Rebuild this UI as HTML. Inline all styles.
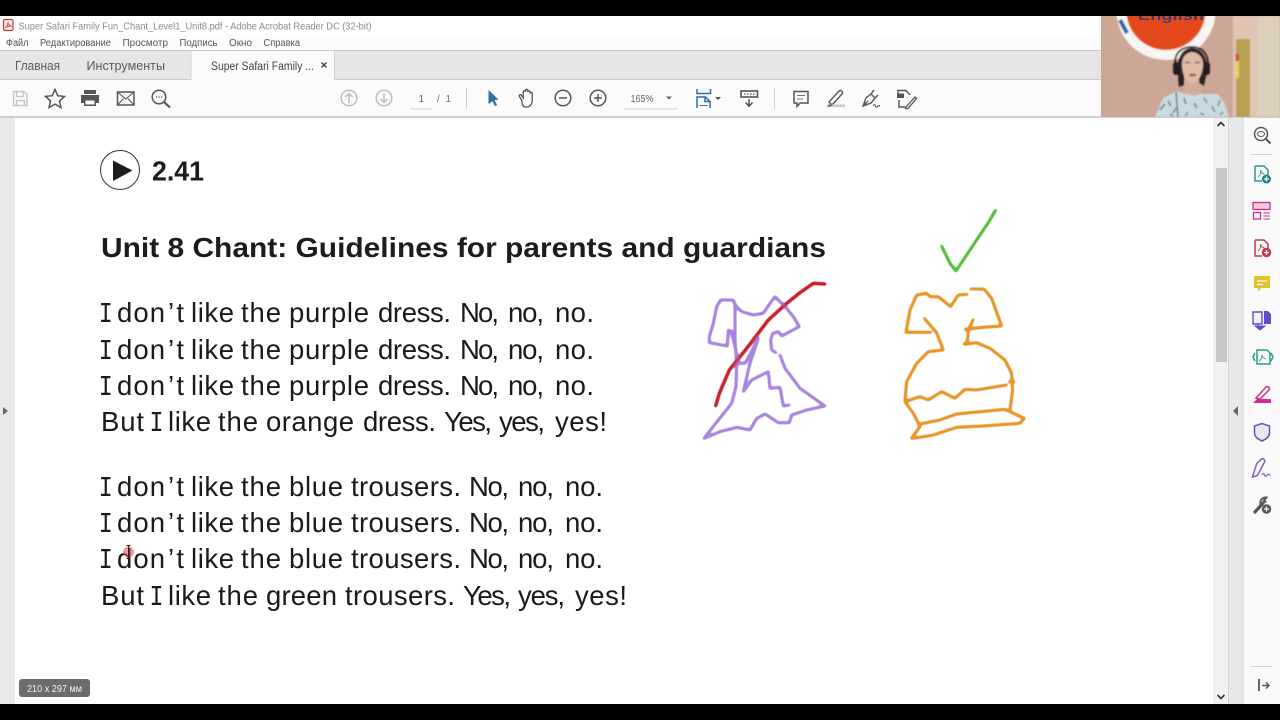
<!DOCTYPE html>
<html lang="ru"><head><meta charset="utf-8"><title>Super Safari Family Fun Chant</title>
<style>
html,body{margin:0;padding:0;background:#000;width:1280px;height:720px;overflow:hidden}
svg{display:block;filter:blur(.3px)}
text{font-family:"Liberation Sans","Noto Sans CJK SC",sans-serif}
.l{font-size:27.5px;fill:#1a1a1a}
.i{font-size:29px;fill:#1a1a1a;font-family:"Liberation Mono",monospace}
.b{font-size:27.5px;font-weight:bold;fill:#1c1c1c}
.m{font-size:10px;fill:#555}
.t{font-size:13px;fill:#5a5a5a}
.g{fill:none;stroke:#555;stroke-width:1.5}
</style></head><body>
<svg width="1280" height="720" viewBox="0 0 1280 720" xmlns="http://www.w3.org/2000/svg">
<defs>
<filter id="bl"><feGaussianBlur stdDeviation="0.8"/></filter>
<filter id="sl"><feGaussianBlur stdDeviation="0.35"/></filter>
<filter id="ink" x="-5%" y="-5%" width="110%" height="110%"><feGaussianBlur stdDeviation="3"/><feComponentTransfer><feFuncA type="linear" slope="2.4" intercept="-0.55"/></feComponentTransfer></filter>
<clipPath id="cam"><rect x="1101" y="16" width="179" height="101"/></clipPath>
</defs>
<rect width="1280" height="720" fill="#000"/>
<!-- chrome -->
<rect y="16" width="1280" height="18" fill="#fff"/>
<rect y="34" width="1280" height="16" fill="#fcfcfc"/>
<rect y="50" width="1280" height="1.5" fill="#c9c9c9"/>
<rect y="51" width="1280" height="28" fill="#e6e6e6"/>
<rect x="191" y="51" width="143" height="29" fill="#fbfbfb"/>
<rect x="190.500" y="51" width="1" height="29" fill="#d4d4d4"/>
<rect x="334" y="51" width="1" height="29" fill="#d4d4d4"/>
<rect y="79" width="191" height="1" fill="#c9c9c9"/><rect x="334" y="79" width="946" height="1" fill="#c9c9c9"/>
<rect y="80" width="1280" height="36" fill="#fbfbfb"/>
<rect y="116" width="1280" height="2" fill="#d0d0d0"/>
<!-- content -->
<rect y="118" width="1280" height="586" fill="#fff"/>
<rect y="118" width="15" height="586" fill="#e9e9e9"/>
<rect x="1213" y="118" width="16" height="586" fill="#f1f1f1"/>
<rect x="1216" y="168" width="11" height="194" fill="#c8c8c8"/>
<rect x="1229" y="118" width="14" height="586" fill="#e8e8e8"/>
<rect x="1228" y="118" width="1" height="586" fill="#d4d4d4"/>
<rect x="1242.500" y="118" width="1" height="586" fill="#d4d4d4"/>
<rect x="1243.500" y="118" width="37" height="586" fill="#fafafa"/>
<path d="M3 407l5 4-5 4z" fill="#666"/>
<path d="M1238 406v10l-5-5z" fill="#666"/>
<path d="M1217.500 126l3.500-3.500 3.500 3.500" fill="none" stroke="#333" stroke-width="1.6"/>
<path d="M1217.500 695l3.500 3.500 3.500-3.500" fill="none" stroke="#333" stroke-width="1.6"/>

<!-- title / menu -->
<g fill="none" stroke="#c0392b" stroke-width="1.2"><rect x="3.500" y="19.500" width="9.500" height="11" rx="1.500" fill="#fbeaea"/><path d="M5 28c2-1 3-4 3-6 0 2 1 4 4 4-2 0-5 0-7 2z" stroke-width=".8"/></g>
<text x="18.500" y="29.500" font-size="10.500" fill="#8c8c8c" textLength="353" lengthAdjust="spacingAndGlyphs">Super Safari Family Fun_Chant_Level1_Unit8.pdf - Adobe Acrobat Reader DC (32-bit)</text>
<text class="m" x="6" y="46" textLength="22.500" lengthAdjust="spacingAndGlyphs">Файл</text>
<text class="m" x="40" y="46" textLength="71" lengthAdjust="spacingAndGlyphs">Редактирование</text>
<text class="m" x="122.500" y="46" textLength="45.500" lengthAdjust="spacingAndGlyphs">Просмотр</text>
<text class="m" x="179.500" y="46" textLength="38" lengthAdjust="spacingAndGlyphs">Подпись</text>
<text class="m" x="229" y="46" textLength="23" lengthAdjust="spacingAndGlyphs">Окно</text>
<text class="m" x="263.500" y="46" textLength="36.500" lengthAdjust="spacingAndGlyphs">Справка</text>
<text class="t" x="15" y="70" textLength="45" lengthAdjust="spacingAndGlyphs">Главная</text>
<text class="t" x="86.500" y="70" textLength="78.500" lengthAdjust="spacingAndGlyphs">Инструменты</text>
<text x="211" y="70" font-size="11.500" fill="#444" textLength="103" lengthAdjust="spacingAndGlyphs">Super Safari Family ...</text>
<path d="M321.500 62.500l5 5m0-5l-5 5" stroke="#444" stroke-width="1.400"/>

<!-- toolbar icons left -->
<g fill="none" stroke="#c6c6c6" stroke-width="1.500"><path d="M13.500 91.500h10.500l3 3v11h-13.500z"/><path d="M16.500 91.500v5h6.500v-5M16.500 105.500v-5h8v5"/></g>
<path d="M55 89.500l2.800 6.200 6.700.7-5 4.500 1.400 6.600-5.900-3.400-5.900 3.400 1.400-6.600-5-4.500 6.700-.7z" class="g"/>
<path d="M84 90h12v4h-12zM81 95h18v8h-3v3h-12v-3h-3z" fill="#555"/><rect x="85.500" y="100.500" width="9" height="4" fill="#fbfbfb"/>
<rect x="117.500" y="92" width="16.500" height="13" class="g"/><path d="M117.500 92l8.250 7 8.250-7M117.500 105l6-6.500M134 105l-6-6.500" fill="none" stroke="#555" stroke-width="1.100"/>
<circle cx="159" cy="97" r="6.800" class="g"/><path d="M164 102l6 5.500" stroke="#555" stroke-width="2.200"/><path d="M156 97h1.200M158.500 97h1.200M161 97h1.200" stroke="#555" stroke-width="1.200"/>
<g fill="none" stroke="#bcbcbc" stroke-width="1.500"><circle cx="349" cy="98" r="7.800"/><path d="M349 103v-9.500M345.500 97l3.500-3.500 3.500 3.500"/><circle cx="384" cy="98" r="7.800"/><path d="M384 93v9.500M380.500 99l3.500 3.500 3.500-3.500"/></g>
<text x="418.500" y="102" font-size="10" fill="#666">1</text>
<text x="437" y="102" font-size="10" fill="#777" textLength="14" lengthAdjust="spacing">/ 1</text>
<rect x="410" y="108.500" width="22" height="1" fill="#cfcfcf"/>
<rect x="466" y="88" width="1" height="21" fill="#d2d2d2"/>
<!-- toolbar icons center -->
<path d="M488.500 90l10 9.500-4 .6 2.600 5-2.200 1-2.400-5-4 3z" fill="#2f6ea8"/>
<path d="M522 101l-2.500-4.500c-1-1.500 1-2.500 2-1l1.800 2.500v-6c0-1.600 2.200-1.600 2.200 0v-1.500c0-1.600 2.300-1.600 2.300 0v1.500c0-1.400 2.200-1.400 2.200 0v1.500c0-1.400 2.200-1.400 2.200 0v7c0 3-2 6.500-5 6.500h-2c-1.600 0-2.200-1.500-3.200-3.500z" fill="none" stroke="#555" stroke-width="1.300"/>
<circle cx="563" cy="98" r="7.800" class="g"/><path d="M559 98h8" class="g"/>
<circle cx="598" cy="98" r="7.800" class="g"/><path d="M594 98h8M598 94v8" class="g"/>
<text x="630.500" y="102" font-size="10" fill="#666" textLength="23" lengthAdjust="spacingAndGlyphs">165%</text>
<path d="M666 96.500h6l-3 3z" fill="#666"/>
<rect x="624" y="108.500" width="54" height="1" fill="#cfcfcf"/>
<g fill="none" stroke="#2f6ea8" stroke-width="1.500"><path d="M697 89v4.500h13.500V89"/><path d="M697 108v-11h8.500l4.500 4.500v6.500"/><path d="M705 97v4.500h5"/></g>
<path d="M699.500 105.500h8" stroke="#2f6ea8" stroke-width="1"/>
<path d="M715 97h6l-3 3z" fill="#555"/>
<rect x="741" y="91" width="16.500" height="6" fill="none" stroke="#555" stroke-width="1.600"/>
<path d="M744 94h1.500M747 94h1.500M750 94h1.500M753 94h1.500" stroke="#555" stroke-width="1.200"/>
<path d="M749 99v7M745.500 102.500l3.500 3.800 3.500-3.800" class="g"/>
<rect x="774" y="88" width="1" height="21" fill="#d2d2d2"/>
<path d="M794 91.500h14v11.500h-8l-3 3.500v-3.500h-3z" class="g"/>
<path d="M797 95.500h8M797 99h6" stroke="#777" stroke-width="1.100"/>
<path d="M829 102l10-11c2-1.500 4.500 1 3 3l-10 11z" fill="none" stroke="#555" stroke-width="1.400"/>
<rect x="827" y="104.500" width="18" height="2.500" fill="#c8c8c8"/><path d="M827 107l3-3 2 2z" fill="#555"/>
<path d="M863 106l3-8 5-4 4 4-4 5zM871 94l3-4M875 98l3-3M863 106l5-5" fill="none" stroke="#555" stroke-width="1.400"/>
<path d="M873 106c1-2 2-2 2.500 0s1.500 1.500 2.500 0 1.500 0 2 .5" fill="none" stroke="#555" stroke-width="1"/>
<path d="M898 95.500v-5h8l4 4.500" fill="none" stroke="#555" stroke-width="1.400"/><rect x="897" y="93.500" width="7" height="4.500" fill="#555"/>
<path d="M899 100v7h6" fill="none" stroke="#555" stroke-width="1.400"/><path d="M906 107l9-10 1.500 1.500-8.500 10h-2.500z" fill="none" stroke="#555" stroke-width="1.300"/>

<!-- webcam -->
<g clip-path="url(#cam)">
<rect x="1101" y="16" width="179" height="101" fill="#cda796"/>
<g filter="url(#bl)">
<rect x="1233" y="16" width="24" height="101" fill="#e0c5b5"/>
<rect x="1257" y="16" width="23" height="101" fill="#dcd0ba"/>
<rect x="1236" y="39" width="14" height="78" fill="#b9a052"/>
<rect x="1235.500" y="54" width="3.500" height="7" fill="#cc5030"/>
<rect x="1235.500" y="61" width="3.500" height="17" fill="#e8d24a"/>
<circle cx="1166" cy="10.300" r="49.700" fill="#f7f5f2"/>
<circle cx="1166" cy="10.300" r="39.700" fill="#e4481f"/>
<path d="M1120 20l7 13" stroke="#2b62a8" stroke-width="4"/>
<path d="M1155 117l8-19 14-7 8 3h17l16 0 7 10 4 13z" fill="#c9dbe1"/>
<path d="M1160 110l5-6M1168 101l3 5M1176 108l-3 5M1184 98l2 6M1194 103l3 5M1204 98l3 5M1212 106l3 6M1220 100l-2 6M1170 114l3 2M1188 112l-3 4M1200 113l4 2M1223 112l-3 3" stroke="#6b8ea3" stroke-width="1.800"/>
<path d="M1176 92l2 25" stroke="#3c5a6e" stroke-width="1.200"/>
<path d="M1185 79h17v14l-8 3-9-3z" fill="#d5ab98"/>
<path d="M1178 66c0-11 6-18 14-18s14 7 15 18c0 8-2 14-3 20l-5-3v-12h-15v14l-5 2c-1-6-1-14-1-21z" fill="#2c2422"/>
<path d="M1182 64c0-7 4-11 9-12 7 0 12 5 12 12 0 10-5 19-11 19s-10-9-10-19z" fill="#e0bba8"/>
<rect x="1173" y="62" width="6.500" height="13" rx="3" fill="#211c1c"/>
<rect x="1204" y="62" width="6" height="13" rx="3" fill="#211c1c"/>
<path d="M1175 63c0-12 8-16 17-16s15 5 16 16" fill="none" stroke="#221c1c" stroke-width="1.800"/>
<ellipse cx="1192.500" cy="75" rx="4" ry="1.500" fill="#ad5a55"/>
<path d="M1185 62.500h5M1195 62.500h5" stroke="#5a463e" stroke-width="1.200"/>
</g>
<text x="1138" y="20" font-size="14" font-weight="bold" fill="#1e3c78" opacity=".85" textLength="66" lengthAdjust="spacingAndGlyphs">English</text>
</g>

<!-- page content -->
<circle cx="120" cy="170" r="19.500" fill="none" stroke="#333" stroke-width="1"/>
<path d="M113 160.500l19.500 10-19.500 10.500z" fill="#1c1c1c"/>
<text class="b" x="152" y="180.500" textLength="52" lengthAdjust="spacingAndGlyphs">2.41</text>
<text class="b" x="101" y="257" textLength="725" lengthAdjust="spacingAndGlyphs">Unit 8 Chant: Guidelines for parents and guardians</text>

<g transform="translate(0 322)">
<text class="i" x="98.700" textLength="14" lengthAdjust="spacingAndGlyphs">I</text><text class="l" x="117" textLength="48">don</text><text class="l" x="168" textLength="16">’t</text><text class="l" x="191" textLength="43">like</text><text class="l" x="241" textLength="40">the</text><text class="l" x="289" textLength="80">purple</text><text class="l" x="378" textLength="73">dress.</text><text class="l" x="460" textLength="39">No,</text><text class="l" x="508" textLength="36">no,</text><text class="l" x="555" textLength="39">no.</text>
</g>
<g transform="translate(0 359)">
<text class="i" x="98.700" textLength="14" lengthAdjust="spacingAndGlyphs">I</text><text class="l" x="117" textLength="48">don</text><text class="l" x="168" textLength="16">’t</text><text class="l" x="191" textLength="43">like</text><text class="l" x="241" textLength="40">the</text><text class="l" x="289" textLength="80">purple</text><text class="l" x="378" textLength="73">dress.</text><text class="l" x="460" textLength="39">No,</text><text class="l" x="508" textLength="36">no,</text><text class="l" x="555" textLength="39">no.</text>
</g>
<g transform="translate(0 395)">
<text class="i" x="98.700" textLength="14" lengthAdjust="spacingAndGlyphs">I</text><text class="l" x="117" textLength="48">don</text><text class="l" x="168" textLength="16">’t</text><text class="l" x="191" textLength="43">like</text><text class="l" x="241" textLength="40">the</text><text class="l" x="289" textLength="80">purple</text><text class="l" x="378" textLength="73">dress.</text><text class="l" x="460" textLength="39">No,</text><text class="l" x="508" textLength="36">no,</text><text class="l" x="555" textLength="39">no.</text>
</g>
<g transform="translate(0 431)">
<text class="l" x="101" textLength="43">But</text><text class="i" x="149.500" textLength="14" lengthAdjust="spacingAndGlyphs">I</text><text class="l" x="168" textLength="43">like</text><text class="l" x="218" textLength="40">the</text><text class="l" x="266" textLength="88">orange</text><text class="l" x="363" textLength="73">dress.</text><text class="l" x="444" textLength="48">Yes,</text><text class="l" x="499" textLength="46">yes,</text><text class="l" x="555" textLength="52">yes!</text>
</g>
<g transform="translate(0 496)">
<text class="i" x="98.700" textLength="14" lengthAdjust="spacingAndGlyphs">I</text><text class="l" x="117" textLength="48">don</text><text class="l" x="168" textLength="16">’t</text><text class="l" x="191" textLength="43">like</text><text class="l" x="241" textLength="40">the</text><text class="l" x="289" textLength="54">blue</text><text class="l" x="351" textLength="110">trousers.</text><text class="l" x="469" textLength="40">No,</text><text class="l" x="518" textLength="36">no,</text><text class="l" x="565" textLength="38">no.</text>
</g>
<g transform="translate(0 532)">
<text class="i" x="98.700" textLength="14" lengthAdjust="spacingAndGlyphs">I</text><text class="l" x="117" textLength="48">don</text><text class="l" x="168" textLength="16">’t</text><text class="l" x="191" textLength="43">like</text><text class="l" x="241" textLength="40">the</text><text class="l" x="289" textLength="54">blue</text><text class="l" x="351" textLength="110">trousers.</text><text class="l" x="469" textLength="40">No,</text><text class="l" x="518" textLength="36">no,</text><text class="l" x="565" textLength="38">no.</text>
</g>
<g transform="translate(0 568)">
<text class="i" x="98.700" textLength="14" lengthAdjust="spacingAndGlyphs">I</text><text class="l" x="117" textLength="48">don</text><text class="l" x="168" textLength="16">’t</text><text class="l" x="191" textLength="43">like</text><text class="l" x="241" textLength="40">the</text><text class="l" x="289" textLength="54">blue</text><text class="l" x="351" textLength="110">trousers.</text><text class="l" x="469" textLength="40">No,</text><text class="l" x="518" textLength="36">no,</text><text class="l" x="565" textLength="38">no.</text>
</g>
<g transform="translate(0 605)">
<text class="l" x="101" textLength="43">But</text><text class="i" x="149.500" textLength="14" lengthAdjust="spacingAndGlyphs">I</text><text class="l" x="168" textLength="43">like</text><text class="l" x="218" textLength="40">the</text><text class="l" x="266" textLength="71">green</text><text class="l" x="345" textLength="110">trousers.</text><text class="l" x="463" textLength="48">Yes,</text><text class="l" x="518" textLength="47">yes,</text><text class="l" x="575" textLength="52">yes!</text>
</g>
<circle cx="128.500" cy="552" r="5.500" fill="#dc3c50" opacity=".5" filter="url(#sl)"/>
<path d="M126.500 545.500h4M126.500 558.500h4M128.500 546v12" stroke="#222" stroke-width="1"/>

<!-- drawings -->
<g filter="url(#ink)" transform="translate(700 280) scale(.3333)" stroke-width="8.500" fill="none" stroke-linejoin="round" stroke-linecap="round">
<g stroke="#a985e0">
<path d="M82 198L28 188L28 170L40 130L50 80L62 60L100 60L105 75L125 95L160 105L190 100L210 70L225 50L260 85L280 110L298 140L260 160L245 168L235 155"/>
<path d="M235 155L218 160L212 180L215 210L228 218M240 225L255 265L300 325L375 378L320 390L275 405L268 428L235 428L195 402L170 415L150 450L110 442L60 455L12 475"/>
<path d="M12 475L55 420L95 370L108 320L110 250L105 180L105 70"/>
<path d="M82 198L85 150L95 155L105 200L115 250L135 250L155 215L175 175L150 250L130 335L155 300L205 275L210 325L240 322L250 378L268 375"/>
</g>
<path d="M47 378L58 340L88 270L140 205L205 120L260 70L300 38L340 10L375 12" stroke="#c9202c" stroke-width="9.500"/>
</g>
<g filter="url(#ink)" transform="translate(690 200) scale(.3333)" stroke-width="8.500" fill="none" stroke-linejoin="round" stroke-linecap="round">
<path d="M755 138L780 190L798 213L850 135L900 60L917 30" stroke="#55c03a"/>
<g stroke="#e8962a">
<path d="M648 397L660 330L680 285L710 280L720 290L745 290L782 320L805 285L832 283"/>
<path d="M842 267L882 267L905 295L935 378L880 382L825 388"/>
<path d="M850 358L835 390L832 425L822 433L860 428L900 445L945 480L965 520L968 570L960 632"/>
<path d="M648 397L722 397M703 355L740 398L760 450L715 455L680 490L650 545L645 605L670 640L690 680L665 715"/>
<path d="M645 605L690 590L715 600L755 575L795 595L825 568L860 570L950 555"/>
<path d="M690 672L750 660L800 642L945 628L1003 655L990 670L880 678L800 682L730 705L690 712L665 715"/>
<path d="M958 545L972 545"/>
</g>
</g>

<!-- size badge -->
<rect x="19" y="679" width="71" height="18" rx="3" fill="#6c6c6c"/>
<text x="27" y="692" font-size="10" fill="#f2f2f2" textLength="55" lengthAdjust="spacingAndGlyphs">210 x 297 мм</text>

<!-- right tools -->
<circle cx="1261" cy="134" r="6.500" class="g"/><path d="M1266 139l4.500 4.500" stroke="#555" stroke-width="2"/><ellipse cx="1261" cy="134" rx="3.500" ry="2.500" fill="none" stroke="#555"/>
<rect x="1251" y="154" width="21" height="1" fill="#d5d5d5"/>
<path d="M1255 166h9l4 4v5M1255 166v15h7" fill="none" stroke="#2a9a8e" stroke-width="1.500"/>
<path d="M1258 177c2-1 3-4 2.500-7 .5 2 1.500 4 4 4" fill="none" stroke="#2a9a8e" stroke-width=".9"/>
<circle cx="1266.500" cy="179" r="4.500" fill="#13877a"/><path d="M1264 179h5M1266.500 176.500v5" stroke="#fff" stroke-width="1.300"/>
<rect x="1253" y="202.500" width="17" height="7" fill="#f5c7e2" stroke="#c0308e" stroke-width="1.300"/>
<rect x="1253.500" y="212.500" width="7" height="6.500" fill="none" stroke="#c0308e" stroke-width="1.300"/>
<path d="M1263.500 213h6.500M1263.500 216h6.500M1263.500 219h6.500" stroke="#c0308e" stroke-width="1"/>
<path d="M1255 240h9l4 4v5M1255 240v16h7" fill="none" stroke="#c03a4c" stroke-width="1.500"/>
<path d="M1258 251c2-1 3-4 2.500-7 .5 2 1.500 4 4 4" fill="none" stroke="#c03a4c" stroke-width=".9"/>
<circle cx="1266.500" cy="252.500" r="4.700" fill="#c03a4c"/><path d="M1264 252.500h5M1266.500 250v5" stroke="#fff" stroke-width="1.300"/>
<path d="M1254 276h16v12h-9l-3 4v-4h-4z" fill="#e3c02e"/><path d="M1257 281h10M1257 284.500h6" stroke="#fff" stroke-width="1.200"/>
<path d="M1253 312h9v12h-9z" fill="#f2f0fb" stroke="#5b50c8" stroke-width="1.400"/><path d="M1264 311h4l3 3v10h-7z" fill="#5b50c8"/>
<path d="M1258 324v4M1255 326l5 4 5-4z" fill="#5b50c8" stroke="#5b50c8"/>
<path d="M1257 350h10l3 3v11h-13z" fill="none" stroke="#2a9a8e" stroke-width="1.500"/>
<path d="M1255 353l-2 4 2 4M1271 353l2 4-2 4" fill="none" stroke="#2a9a8e" stroke-width="1.500"/>
<path d="M1259 361c2-1 3-3 3-6 .5 2 1 3 4 4" fill="none" stroke="#2a9a8e" stroke-width=".9"/>
<path d="M1256 398l10-11c2-1.500 4.500 1 3 3l-9 9z" fill="none" stroke="#d42c8c" stroke-width="1.500"/>
<path d="M1253 403l4-4h14v4z" fill="#d42c8c"/>
<path d="M1254.500 426l7.500-2.500 7.500 2.500v7c0 4-4 6.500-7.500 8-3.500-1.500-7.500-4-7.500-8z" fill="#e6e6f6" stroke="#5a5aa8" stroke-width="1.500"/>
<path d="M1252.500 477l4-13 5-5c2-1 4 1 3 3l-7 13.500z" fill="none" stroke="#8a5cc8" stroke-width="1.500"/>
<path d="M1262 475c1-2 2-2 2.500 0s1.500 1.500 2.500 0 1.500-.5 3.500.5" fill="none" stroke="#8a5cc8" stroke-width="1.200"/>
<path d="M1255 512l8-9" stroke="#555" stroke-width="3.200" stroke-linecap="round"/><path d="M1261 505c-2-4 1-8 5.500-7.500l-2.500 3 2 2" fill="none" stroke="#555" stroke-width="2"/>
<circle cx="1266.500" cy="509" r="4.700" fill="#555"/><path d="M1264 509h5M1266.500 506.500v5" stroke="#fff" stroke-width="1.300"/>
<rect x="1251" y="666" width="21" height="1" fill="#d5d5d5"/>
<path d="M1259 679v12" stroke="#555" stroke-width="1.800"/><path d="M1262 685.500h7M1266 682.500l3 3-3 3" fill="none" stroke="#555" stroke-width="1.400"/>
</svg>
</body></html>
